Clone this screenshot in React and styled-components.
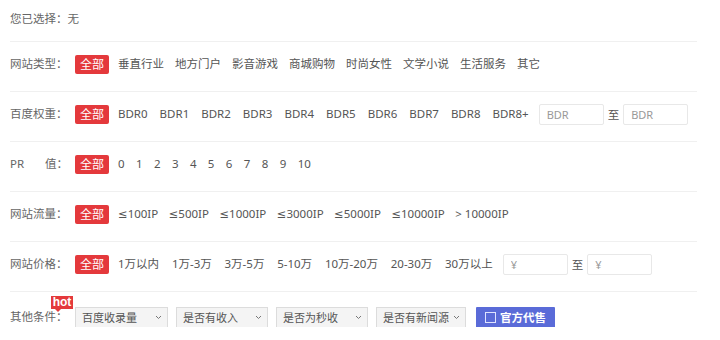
import React from 'react';
import styled, { createGlobalStyle } from 'styled-components';

const COLORS = {
  red: '#e4393c',
  text: '#555',
  label: '#666',
  line: '#f0f0f0',
  blue: '#5a6bd8',
};

const GlobalStyle = createGlobalStyle`
  body {
    margin: 0;
    background: #fff;
    font-family: "Noto Sans", "Noto Sans CJK SC", sans-serif;
    font-size: 11.5px;
    color: ${COLORS.text};
  }
`;

const types = ['垂直行业', '地方门户', '影音游戏', '商城购物', '时尚女性', '文学小说', '生活服务', '其它'];
const bdr = ['BDR0', 'BDR1', 'BDR2', 'BDR3', 'BDR4', 'BDR5', 'BDR6', 'BDR7', 'BDR8', 'BDR8+'];
const pr = ['0', '1', '2', '3', '4', '5', '6', '7', '8', '9', '10'];
const traffic = ['≤100IP', '≤500IP', '≤1000IP', '≤3000IP', '≤5000IP', '≤10000IP', '> 10000IP'];
const prices = ['1万以内', '1万-3万', '3万-5万', '5-10万', '10万-20万', '20-30万', '30万以上'];
const selects = [
  { text: '百度收录量', width: 93 },
  { text: '是否有收入', width: 92 },
  { text: '是否为秒收', width: 92 },
  { text: '是否有新闻源', width: 90 },
];

const Chevron = () => (
  <svg width="7" height="5" viewBox="0 0 7 5">
    <path d="M1 1 L3.5 3.5 L6 1" fill="none" stroke="#777" strokeWidth="1" />
  </svg>
);

const RangeInputs = ({ placeholder }) => (
  <Range>
    <Input placeholder={placeholder} />
    <span>至</span>
    <Input placeholder={placeholder} />
  </Range>
);

const FilterRow = ({ label, items, gap, children }) => (
  <Row>
    <Label>{label}</Label>
    <All>全部</All>
    <Items $gap={gap}>
      {items.map((item) => (
        <Item key={item}>{item}</Item>
      ))}
    </Items>
    {children}
  </Row>
);

const App = () => (
  <>
    <GlobalStyle />
    <Panel>
      <Selected>您已选择：无</Selected>
      <FilterRow label="网站类型：" items={types} gap={11} />
      <FilterRow label="百度权重：" items={bdr} gap={12}>
        <RangeInputs placeholder="BDR" />
      </FilterRow>
      <FilterRow label={<><Pr>PR</Pr>值：</>} items={pr} gap={11.4} />
      <FilterRow label="网站流量：" items={traffic} gap={10.5} />
      <FilterRow label="网站价格：" items={prices} gap={12.8}>
        <RangeInputs placeholder="¥" />
      </FilterRow>
      <Row $last>
        <Label>
          其他条件：
          <Hot>hot</Hot>
        </Label>
        <Items $gap={8}>
          {selects.map((s) => (
            <Select key={s.text} style={{ width: s.width }}>
              <span>{s.text}</span>
              <Chevron />
            </Select>
          ))}
          <OfficialButton>
            <Box />
            官方代售
          </OfficialButton>
        </Items>
      </Row>
    </Panel>
  </>
);

const Panel = styled.div`
  width: 687px;
  margin-left: 10px;
`;

const Selected = styled.div`
  height: 20px;
  line-height: 20px;
  padding: 9px 0 12px;
  color: ${COLORS.label};
  border-bottom: 1px solid ${COLORS.line};
`;

const Row = styled.div`
  display: flex;
  align-items: center;
  height: 20px;
  padding: ${(p) => (p.$last ? '15px 0 0' : '12px 0 17px')};
  border-bottom: ${(p) => (p.$last ? 'none' : `1px solid ${COLORS.line}`)};
`;

const Label = styled.div`
  position: relative;
  width: 65px;
  flex-shrink: 0;
  color: ${COLORS.label};
  line-height: 20px;
  white-space: nowrap;
`;

const Pr = styled.span`
  display: inline-block;
  width: 35px;
`;

const Items = styled.div`
  display: flex;
  align-items: center;
  gap: ${(p) => p.$gap || 9}px;
  font-family: "Noto Sans", "DejaVu Sans", "Noto Sans CJK SC", sans-serif;
`;

const All = styled.span`
  flex-shrink: 0;
  width: 34px;
  height: 19px;
  line-height: 19px;
  margin-right: 9px;
  text-align: center;
  background: ${COLORS.red};
  color: #fff;
  font-size: 12px;
  border-radius: 2px;
`;

const Item = styled.span`
  white-space: nowrap;
  line-height: 20px;
`;

const Range = styled.div`
  display: flex;
  align-items: center;
  gap: 4px;
  margin-left: 10px;
  color: ${COLORS.text};
`;

const Input = styled.input`
  box-sizing: border-box;
  width: 65px;
  height: 21px;
  border: 1px solid #e8e8e8;
  border-radius: 2px;
  padding: 0 7px;
  font-family: inherit;
  font-size: 11px;
  outline: none;
  &::placeholder {
    color: #999;
  }
`;

const Hot = styled.span`
  position: absolute;
  left: 41px;
  top: -11px;
  width: 22px;
  height: 13px;
  line-height: 12px;
  text-align: center;
  background: ${COLORS.red};
  color: #fff;
  font-family: "Liberation Sans", Arial, sans-serif;
  font-size: 12px;
  font-weight: bold;
  &::after {
    content: '';
    position: absolute;
    left: 4px;
    bottom: -3px;
    border-left: 3px solid transparent;
    border-right: 3px solid transparent;
    border-top: 3px solid ${COLORS.red};
  }
`;

const Select = styled.div`
  box-sizing: border-box;
  display: flex;
  align-items: center;
  justify-content: space-between;
  height: 21px;
  padding: 0 5px 0 6px;
  background: #f4f4f4;
  border: 1px solid #dcdcdc;
  color: ${COLORS.text};
  font-size: 11px;
  white-space: nowrap;
`;

const OfficialButton = styled.div`
  box-sizing: border-box;
  display: flex;
  align-items: center;
  gap: 4px;
  width: 79px;
  height: 21px;
  padding-left: 9px;
  margin-left: 2px;
  background: ${COLORS.blue};
  color: #fff;
  font-weight: bold;
  border-radius: 1px;
`;

const Box = styled.span`
  box-sizing: border-box;
  width: 11px;
  height: 11px;
  border: 1px solid #dfe3ff;
`;

export default App;
